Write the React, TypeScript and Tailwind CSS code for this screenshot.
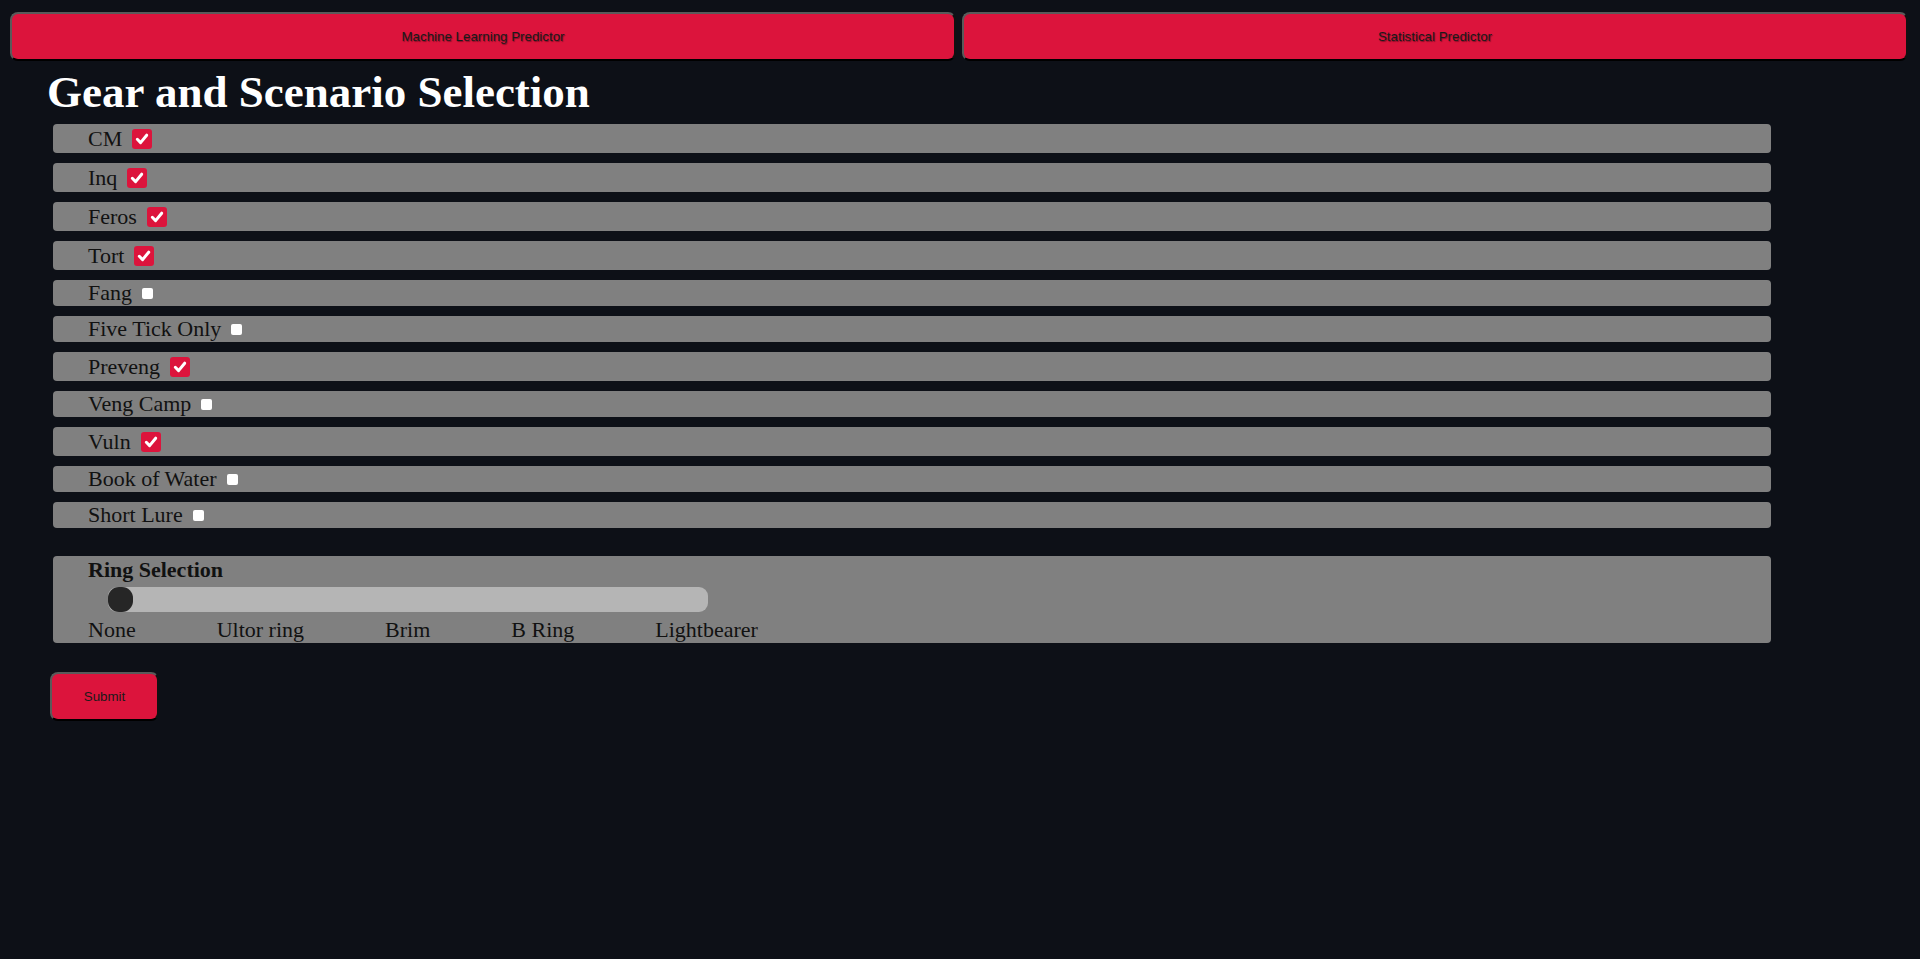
import React, { useState } from 'react';

type Option = { label: string; checked: boolean };

const initialOptions: Option[] = [
  { label: 'CM', checked: true },
  { label: 'Inq', checked: true },
  { label: 'Feros', checked: true },
  { label: 'Tort', checked: true },
  { label: 'Fang', checked: false },
  { label: 'Five Tick Only', checked: false },
  { label: 'Preveng', checked: true },
  { label: 'Veng Camp', checked: false },
  { label: 'Vuln', checked: true },
  { label: 'Book of Water', checked: false },
  { label: 'Short Lure', checked: false },
];

const rings = ['None', 'Ultor ring', 'Brim', 'B Ring', 'Lightbearer'];

const serif = "font-['Liberation_Serif','Times_New_Roman',serif]";
const sans = "font-['Liberation_Sans',Arial,sans-serif]";

function Check({ checked, onClick }: { checked: boolean; onClick: () => void }) {
  // checked boxes render larger than the empty ones
  if (checked) {
    return (
      <span
        onClick={onClick}
        className="ml-[10px] flex h-[20px] w-[20px] cursor-pointer items-center justify-center rounded-[3px] bg-[#dc143c]"
      >
        <svg width="14" height="14" viewBox="0 0 14 14">
          <path d="M2.3 7.3 L5.6 10.6 L11.7 3.2" fill="none" stroke="#fff" strokeWidth="3" strokeLinecap="round" strokeLinejoin="round" />
        </svg>
      </span>
    );
  }
  return <span onClick={onClick} className="ml-[10px] h-[11px] w-[11px] cursor-pointer rounded-[2px] bg-white" />;
}

export default function App() {
  const [options, setOptions] = useState<Option[]>(initialOptions);
  const [ring, setRing] = useState<number>(0);

  const toggle = (i: number) => {
    setOptions(prev => prev.map((o, j) => (j === i ? { ...o, checked: !o.checked } : o)));
  };

  return (
    <div className="min-h-[959px] w-full bg-[#0d1017] pt-[12px]">
      <div className="flex gap-[6px] px-[10px]">
        <button className={`${sans} h-[49px] w-[946px] rounded-[8px] border-2 border-t-[#5a5a5a] border-l-[#5a5a5a] border-r-[#111] border-b-[#000] bg-[#dc143c] text-[13.33px] text-[#1a1a1a] [text-shadow:1px_1px_1px_rgba(0,0,0,0.4)]`}>
          Machine Learning Predictor
        </button>
        <button className={`${sans} h-[49px] w-[946px] rounded-[8px] border-2 border-t-[#5a5a5a] border-l-[#5a5a5a] border-r-[#111] border-b-[#000] bg-[#dc143c] text-[13.33px] text-[#1a1a1a] [text-shadow:1px_1px_1px_rgba(0,0,0,0.4)]`}>
          Statistical Predictor
        </button>
      </div>

      <h1 className={`${serif} ml-[47px] mt-[9px] text-[45px] font-bold leading-none text-white`}>
        Gear and Scenario Selection
      </h1>

      <div className="ml-[53px] mt-[9px] flex w-[1718px] flex-col gap-[10px]">
        {options.map((o, i) => (
          <div
            key={o.label}
            className={`flex items-center rounded-[4px] bg-[#808080] pl-[35px] ${o.checked ? 'h-[29px]' : 'h-[26px]'}`}
          >
            <span className={`${serif} text-[22px] leading-[24px] text-[#111]`}>{o.label}</span>
            <Check checked={o.checked} onClick={() => toggle(i)} />
          </div>
        ))}
      </div>

      <div className="ml-[53px] mt-[28px] h-[87px] w-[1718px] rounded-[4px] bg-[#808080] pl-[35px] pt-[2px]">
        <div className={`${serif} text-[22px] font-bold leading-[24px] text-[#111]`}>Ring Selection</div>
        <div className="relative ml-[20px] mt-[5px] h-[25px] w-[600px] rounded-[9px] bg-[#b5b5b5]">
          <div
            className="absolute top-0 h-[25px] w-[25px] cursor-pointer rounded-[11px] bg-[#262626]"
            style={{ left: `${(ring / (rings.length - 1)) * 575}px` }}
          />
        </div>
        <div className="mt-[6px] flex gap-[81px]">
          {rings.map((r, i) => (
            <span
              key={r}
              onClick={() => setRing(i)}
              className={`${serif} cursor-pointer text-[22px] leading-[24px] text-[#111]`}
            >
              {r}
            </span>
          ))}
        </div>
      </div>

      <button className={`${sans} ml-[50px] mt-[29px] h-[49px] w-[109px] rounded-[8px] border-2 border-t-[#5a5a5a] border-l-[#5a5a5a] border-r-[#111] border-b-[#000] bg-[#dc143c] text-[13.33px] text-[#1a1a1a]`}>
        Submit
      </button>
    </div>
  );
}
